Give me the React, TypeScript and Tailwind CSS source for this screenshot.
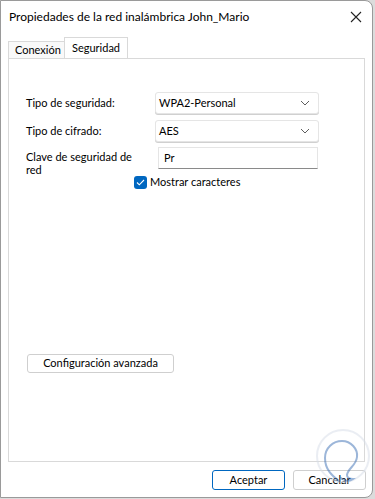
import { useState } from "react";

const Chevron = () => (
  <svg width="10" height="6" viewBox="0 0 10 6" className="text-[#5f5f5f]">
    <path d="M1 1l4 4 4-4" fill="none" stroke="currentColor" strokeWidth="1" />
  </svg>
);

const Select = ({ value }: { value: string }) => (
  <div className="flex h-[22px] w-[164px] items-center justify-between rounded-[3px] border border-[#e5e5e5] bg-white pl-[3px] pr-[8px] shadow-[0_1px_0_#d0d0d0]">
    <span>{value}</span>
    <Chevron />
  </div>
);

const App = () => {
  const [show, setShow] = useState(true);

  return (
    <div className="h-[499px] w-[375px] overflow-hidden bg-[#dcdcdc] font-['Lato',sans-serif] text-[11px] text-black">
      <div className="flex h-[498px] w-[373px] flex-col rounded-br-[8px] rounded-tr-[8px] border border-[#9a9a9a] bg-white">
        {/* title bar */}
        <div className="flex h-[31px] items-center justify-between pl-[8px] pr-[10px]">
          <span className="text-[12px]">Propiedades de la red inalámbrica John_Mario</span>
          <svg width="12" height="12" viewBox="0 0 12 12">
            <path d="M1 1l10 10M11 1L1 11" stroke="#222" strokeWidth="1.1" />
          </svg>
        </div>

        {/* tabs */}
        <div className="ml-[7px] mt-[5px] flex items-end">
          <div className="flex h-[18px] w-[57px] items-center border border-b-0 border-[#d9d9d9] bg-[#f9f9f9] pl-[6px]">Conexión</div>
          <div className="-ml-px flex h-[22px] w-[64px] items-center justify-center border border-b-0 border-[#d9d9d9] bg-white">Seguridad</div>
        </div>

        {/* panel */}
        <div className="mx-[7px] -mt-px flex h-[404px] flex-col border border-[#d9d9d9] bg-white pt-[33px]">
          <div className="flex items-center pl-[17px]">
            <span className="w-[129px]">Tipo de seguridad:</span>
            <Select value="WPA2-Personal" />
          </div>
          <div className="mt-[6px] flex items-center pl-[17px]">
            <span className="w-[129px]">Tipo de cifrado:</span>
            <Select value="AES" />
          </div>
          <div className="mt-[5px] flex h-[22px] items-start pl-[17px]">
            <span className="mt-[3px] w-[132px] pr-[16px] leading-[13px]">Clave de seguridad de red</span>
            <div className="flex h-[22px] w-[160px] items-center border border-[#e5e5e5] border-b-[#8a8a8a] px-[5px]">Pr</div>
          </div>
          <label className="ml-[125px] mt-[5px] flex items-center gap-[3px]">
            <button
              onClick={() => setShow(!show)}
              className="flex h-[13px] w-[13px] items-center justify-center rounded-[3px] bg-[#0067c0]"
            >
              {show && (
                <svg width="9" height="7" viewBox="0 0 9 7">
                  <path d="M1 3.5l2.3 2.3L8 1" fill="none" stroke="white" strokeWidth="1.1" />
                </svg>
              )}
            </button>
            <span>Mostrar caracteres</span>
          </label>

          <button className="ml-[18px] mt-[163px] flex h-[19px] w-[147px] items-center justify-center rounded-[3px] border border-[#cfcfcf] bg-white">
            Configuración avanzada
          </button>
        </div>

        {/* footer */}
        <div className="relative mt-[8px] flex justify-end gap-[8px] pr-[6px]">
          <button className="flex h-[20px] w-[73px] items-center justify-center rounded-[3px] border border-[#0067c0] bg-white">Aceptar</button>
          <button className="flex h-[20px] w-[73px] items-center justify-center rounded-[3px] border border-[#cfcfcf] bg-white">Cancelar</button>
          <svg width="54" height="70" viewBox="0 0 54 70" className="absolute right-[2px] top-[-42px] opacity-50">
            <circle cx="27" cy="28" r="26" fill="none" stroke="#d6dde8" strokeWidth="2" />
            <path d="M24 54c-6-5-15-11-15-24 0-10 8-17 17-17s16 8 15 16c-1 9-9 11-10 18 0 3 3 4 6 4-4 3-10 2-13-2" fill="none" stroke="#3b6fb5" strokeWidth="2" />
          </svg>
        </div>
      </div>
    </div>
  );
};

export default App;
